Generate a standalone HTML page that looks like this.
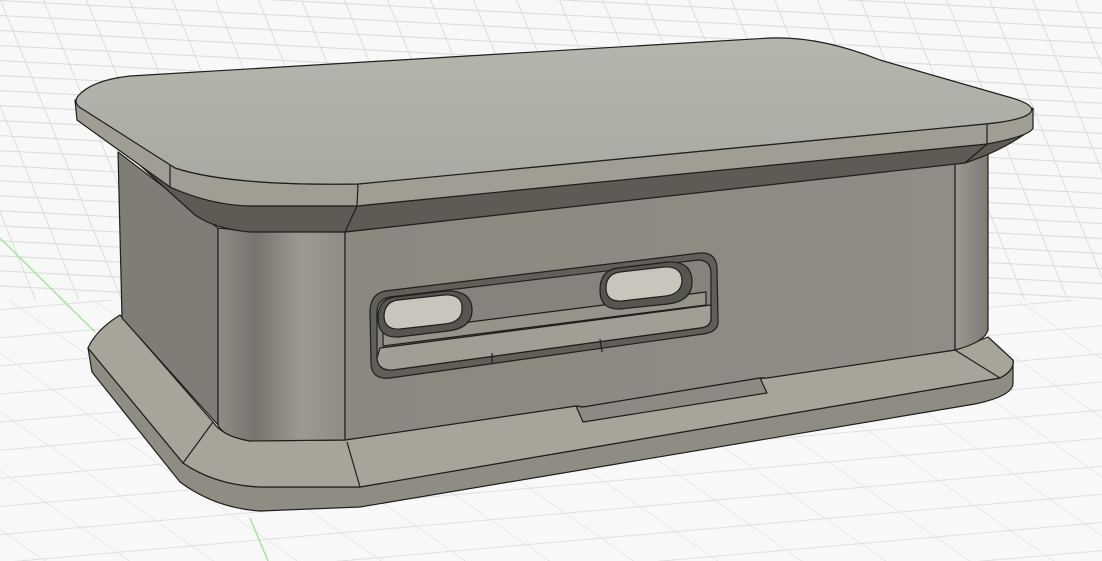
<!DOCTYPE html>
<html><head><meta charset="utf-8"><style>
html,body{margin:0;padding:0;background:#f8f8f8;width:1102px;height:561px;overflow:hidden}
svg{display:block}
</style></head><body>
<svg width="1102" height="561" viewBox="0 0 1102 561" xmlns="http://www.w3.org/2000/svg">
<defs>
<pattern id="g" width="44" height="15" patternUnits="userSpaceOnUse" patternTransform="rotate(3) skewX(25)">
<path d="M0 0.5H44M0.5 0V15" stroke="#dadada" stroke-width="1" fill="none"/>
</pattern>
<pattern id="g2" width="75" height="28" patternUnits="userSpaceOnUse" patternTransform="rotate(-5) skewX(50)">
<path d="M0 0.5H75M0.5 0V28" stroke="#e0e0e0" stroke-width="1" fill="none"/>
</pattern>
<linearGradient id="col" x1="0" x2="1" y1="0" y2="0">
<stop offset="0" stop-color="#8e8c84"/><stop offset="0.3" stop-color="#76746d"/><stop offset="0.65" stop-color="#9c9a91"/><stop offset="1" stop-color="#8e8c84"/>
</linearGradient>
<linearGradient id="rcol" x1="0" x2="1"><stop offset="0" stop-color="#9a988f"/><stop offset="1" stop-color="#7d7b74"/></linearGradient>
<linearGradient id="front" x1="0" x2="1"><stop offset="0" stop-color="#8a887f"/><stop offset="1" stop-color="#8f8d85"/></linearGradient>
<linearGradient id="top" x1="0" y1="0" x2="0" y2="1"><stop offset="0" stop-color="#b4b6ae"/><stop offset="1" stop-color="#a9aaa2"/></linearGradient>
</defs>
<rect width="1102" height="561" fill="#f8f8f8"/>
<rect width="1102" height="300" fill="url(#g)"/>
<rect y="300" width="1102" height="261" fill="url(#g2)"/>
<path d="M0 238 L95 332" stroke="#a6e3a0" stroke-width="1.5"/>
<path d="M250 518 L268 561" stroke="#a6e3a0" stroke-width="1.5"/>

<g stroke="#1e1e1c" stroke-width="1.2" stroke-linejoin="round">
<path d="M88,348 L92,372 L180,482 Q215,508 260,511 L360,507 L975,404 Q1013,396 1013,383 L1013,360 Q1015,370 1000,378 L360,487 L260,487 Q215,485 183,463 Z" fill="#8f8c84"/>
<path d="M88,348 L183,463 Q215,485 260,487 L360,487 L1000,378 Q1015,370 1013,360 L988,337 L955,350 L345,440 L250,441 Q222,436 213,422 L120,315 Q96,330 88,348 Z" fill="#a7a49a"/>
<path d="M183,463 L213,422 M360,487 L347,442 M1000,378 L955,350" fill="none"/>
<path d="M118,152 L218,228 L218,425 L122,318 Z" fill="#7f7d76"/>
<path d="M218,228 Q250,232 345,232 L345,440 L250,441 Q222,436 218,425 Z" fill="url(#col)"/>
<path d="M345,232 L955,163 L955,350 L767,378 L760,378 L583,407 L576,406 L345,440 Z" fill="url(#front)"/>
<path d="M576,406 L583,407 L760,378 L767,393 L583,422 Z" fill="#8c8a82" />
<path d="M955,163 L988,150 L988,330 Q985,342 955,350 Z" fill="url(#rcol)"/>
<path d="M112,140 L195,215 Q215,229 250,232 L345,232 L965,163 Q1005,150 1033,128 L987,144 L357,206 L250,206 Q210,205 170,187 L78,120 Z" fill="#5d5b54"/>
<path d="M345,232 L357,206 M965,163 L987,144" fill="none"/>
<path d="M75,100 L77,120 L170,187 Q210,205 250,206 L357,206 L987,144 Q1030,136 1033,128 L1033,108 Q1025,120 985,124 L358,184 Q230,186 175,168 Z" fill="#a09d94"/>
<path d="M170,165 L170,187 M358,184 L357,206 M987,124 L987,144" fill="none"/>
<path d="M78,96 Q92,80 130,76 L770,38 Q820,36 880,60 L1005,96 Q1036,104 1031,112 Q1025,120 985,124 L358,184 Q230,186 175,168 L84,110 Q72,104 78,96 Z" fill="url(#top)"/>

<path d="M385,291 L700,253 Q716,252 717,268 L718,322 Q718,332 703,334 L390,378 Q372,380 371,364 L370,310 Q371,294 385,291 Z" fill="#615f58"/>
<path d="M390,297 L698,260 Q710,260 711,272 L711,318 Q711,327 700,328 L393,370 Q378,371 377,358 L377,311 Q378,299 390,297 Z" fill="#85837b"/>
<path d="M380,348 L711,305 L711,318 Q711,327 700,328 L393,370 Q378,371 377,358 Z" fill="#a19e95"/>
<path d="M383,333 L706,292 L706,305 L383,346 Z" fill="#96938a"/>
<path d="M395,297 L445,291 Q472,290 472,310 Q472,328 448,331 L398,337 Q378,338 378,318 Q378,299 395,297 Z" fill="#57554f"/>
<path d="M398,300 L444,295 Q463,294 462,309 Q462,322 445,324 L400,329 Q385,330 384,317 Q384,302 398,300 Z" fill="#c8c6bc"/>
<path d="M618,268 L668,262 Q692,261 692,282 Q692,301 668,304 L620,309 Q600,310 600,290 Q600,270 618,268 Z" fill="#57554f"/>
<path d="M620,272 L664,267 Q682,266 682,281 Q681,294 666,296 L622,301 Q606,302 606,288 Q606,274 620,272 Z" fill="#c8c6bc"/>
<path d="M492,353 L492,364 M600,339 L602,352" fill="none"/>
</g>
</svg>
</body></html>
